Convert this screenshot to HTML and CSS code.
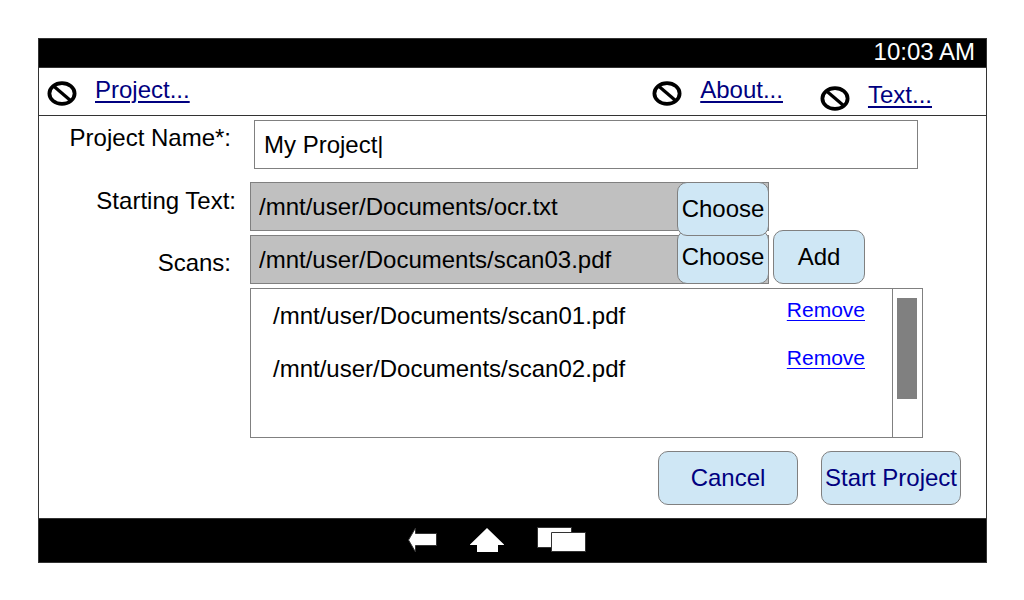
FILE: index.html
```html
<!DOCTYPE html>
<html lang="en">
<head>
<meta charset="utf-8">
<title>New Project</title>
<link rel="stylesheet" href="styles.css">
</head>
<body>
<svg class="symbols" aria-hidden="true">
  <symbol id="blocked" viewBox="0 0 30 26">
    <ellipse cx="15" cy="12.500" rx="12.6" ry="10.4" fill="none" stroke="#000" stroke-width="3.8"/>
    <path d="M6.5 5 23.500 19.500" stroke="#000" stroke-width="3.2"/>
  </symbol>
</svg>
<div class="device">
  <header class="status"><time>10:03 AM</time></header>
  <nav class="toolbar">
    <div class="tool"><svg class="tool-icon"><use href="#blocked"/></svg><a href="#">Project...</a></div>
    <div class="tool tool-end"><svg class="tool-icon"><use href="#blocked"/></svg><a href="#">About...</a></div>
    <div class="tool tool-low"><svg class="tool-icon"><use href="#blocked"/></svg><a href="#">Text...</a></div>
  </nav>
  <form class="form">
    <div class="row row-name">
      <label class="label" for="name">Project Name*:</label>
      <input class="name" id="name" type="text" value="My Project|">
    </div>
    <div class="row row-text">
      <label class="label label-text" for="ocr">Starting Text:</label>
      <div class="picker picker-alone">
        <input class="path" id="ocr" type="text" value="/mnt/user/Documents/ocr.txt" readonly>
        <button class="button choose choose-front" type="button">Choose</button>
      </div>
    </div>
    <div class="row">
      <label class="label label-scans" for="scan">Scans:</label>
      <div class="picker">
        <input class="path" id="scan" type="text" value="/mnt/user/Documents/scan03.pdf" readonly>
        <button class="button choose" type="button">Choose</button>
      </div>
      <button class="button add" type="button">Add</button>
    </div>
    <div class="scans">
      <ul class="files">
        <li id="scan1">/mnt/user/Documents/scan01.pdf</li>
        <li id="scan2">/mnt/user/Documents/scan02.pdf</li>
      </ul>
      <ul class="removes">
        <li><a href="#" aria-describedby="scan1">Remove</a></li>
        <li><a href="#" aria-describedby="scan2">Remove</a></li>
      </ul>
      <div class="scrollbar"><div class="thumb"></div></div>
    </div>
    <div class="actions">
      <button class="button action" type="button">Cancel</button>
      <button class="button action" type="submit">Start Project</button>
    </div>
  </form>
  <footer class="navbar">
    <button class="nav" type="button" aria-label="Back">
      <svg width="29" height="26" viewBox="0 0 29 26"><path d="M.5 13 7.5 1v5.500h21v12h-21V25z" fill="#fff" stroke="#333"/></svg>
    </button>
    <button class="nav" type="button" aria-label="Home">
      <svg width="34" height="26" viewBox="0 0 34 26"><path d="M17 1 34.500 18H28v7H7v-7H-.5z" fill="#fff"/></svg>
    </button>
    <button class="nav" type="button" aria-label="Recent apps">
      <svg width="49" height="26" viewBox="0 0 49 26"><path d="M.5.5h34v20H.5z" fill="#fff" stroke="#333"/><path d="M14.500 5.500h34v19h-34z" fill="#fff" stroke="#333"/></svg>
    </button>
  </footer>
</div>
</body>
</html>
```
FILE: styles.css
```css
* { box-sizing: border-box; }

body {
  margin: 0;
  padding: 38px 37px 37px 38px;
  background: #fff;
  color: #000;
  font: 24px/28px "Liberation Sans", Arial, sans-serif;
}

input, button { font: inherit; color: inherit; margin: 0; }
ul { list-style: none; margin: 0; padding: 0; }
a { text-underline-offset: 3px; }

.symbols { display: none; }
.device { border: 1px solid #333; }

.status {
  display: flex;
  justify-content: flex-end;
  padding: 0 11px 2px 0;
  background: #000;
  color: #fff;
  border-bottom: 1px solid #333;
  line-height: 26px;
}

.toolbar {
  display: flex;
  align-items: flex-start;
  gap: 37px;
  padding: 8px 54px 3px 8px;
  border-bottom: 1px solid #333;
}
.tool { display: flex; gap: 18px; }
.tool a { color: #000080; text-decoration-thickness: 2px; }
.tool-end { margin-left: auto; }
.tool-low { padding-top: 5px; }
.tool-icon { width: 30px; height: 26px; margin-top: 5px; }

.form { padding: 4px 63px 13px 0; }
.row { display: flex; align-items: flex-start; }
.row-name { margin-bottom: 13px; }
.row-text { margin-bottom: 4px; }

.label {
  flex: none;
  width: 211px;
  padding: 4px 19px 0 0;
  text-align: right;
}
.label-text { padding-top: 5px; padding-right: 14px; }
.label-scans { padding-top: 14px; }

.name {
  flex: 1;
  min-width: 0;
  height: 49px;
  margin: 0 5px 0 4px;
  padding: 0 9px;
  border: 1px solid #808080;
  background: #fff;
}

.picker {
  flex: 1;
  min-width: 0;
  display: flex;
  align-items: flex-start;
  height: 49px;
  border: 1px solid #808080;
  background: #c0c0c0;
}
.picker-alone { margin-right: 154px; }
.path {
  flex: 1;
  min-width: 0;
  height: 47px;
  padding: 0 8px;
  border: 0;
  background: transparent;
}

.button {
  flex: none;
  height: 54px;
  padding: 0;
  border: 1px solid #808080;
  border-radius: 10px;
  background: #cfe7f5;
}
.choose { width: 92px; margin: -6px -1px 0 0; }
.choose-front { position: relative; margin-top: -1px; }
.add { width: 92px; margin: -5px 58px 0 4px; }

.scans {
  display: flex;
  min-height: 150px;
  margin: 4px 0 0 211px;
  border: 1px solid #808080;
}
.files {
  flex: 1;
  display: flex;
  flex-direction: column;
  gap: 25px;
  padding: 13px 0 0 22px;
}
.removes {
  display: flex;
  flex-direction: column;
  gap: 24px;
  padding: 9px 27px 0 0;
  font-size: 21px;
  line-height: 24px;
}
.removes a { color: #0000ff; text-decoration-thickness: 1px; }
.scrollbar {
  width: 30px;
  padding: 9px 4px;
  border-left: 1px solid #808080;
}
.thumb { width: 20px; height: 101px; background: #808080; }

.actions {
  display: flex;
  justify-content: flex-end;
  gap: 23px;
  margin: 13px -38px 0 0;
}
.action { width: 140px; color: #000080; }

.navbar {
  display: flex;
  justify-content: center;
  align-items: flex-start;
  gap: 33px;
  padding: 8px 32px 9px 0;
  background: #000;
  border-top: 1px solid #333;
}
.nav { display: flex; padding: 0; border: 0; background: none; }
```
